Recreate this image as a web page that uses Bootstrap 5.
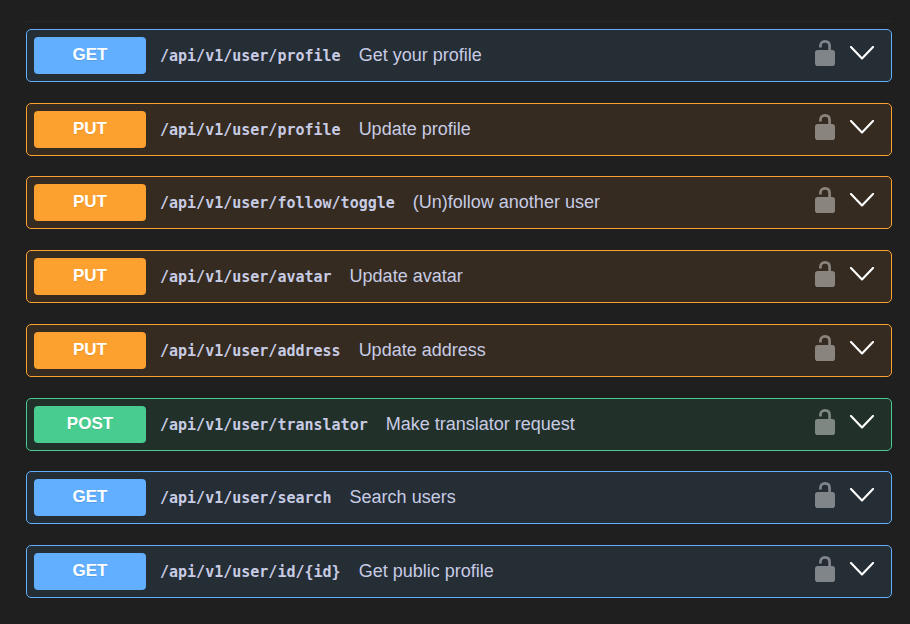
<!DOCTYPE html>
<html lang="en">
<head>
<meta charset="utf-8">
<meta name="viewport" content="width=device-width, initial-scale=1">
<title>User API</title>
<link href="https://cdn.jsdelivr.net/npm/bootstrap@5.3.0/dist/css/bootstrap.min.css" rel="stylesheet">
<style>
  body { background: #1f1f1f; color: #c8cbe4; font-family: "Liberation Sans", Arial, sans-serif; }
  .api-page { padding: 21px 18px 26px 26px; }
  .api-list { border-top: 1px solid #262626; padding-top: 7px; }
  .op { --tone: 97, 175, 254; background: rgba(var(--tone), .1); border: 1px solid rgb(var(--tone)); border-radius: 5px; padding: 7px 16px 7px 7px; }
  .op-put { --tone: 252, 161, 48; }
  .op-post { --tone: 73, 204, 144; }
  .op-main { font-size: 18px; line-height: 22px; gap: 14px; }
  .op-method { width: 112px; height: 37px; line-height: 36px; border-radius: 4px; background: rgb(var(--tone)); color: #fff; font-size: 17px; font-weight: 700; text-shadow: 0 1px 0 rgba(0, 0, 0, .1); }
  .op-path { font-family: "DejaVu Sans Mono", monospace; font-size: 15px; font-weight: 700; line-height: 20px; }
  .op-text { column-gap: 18px; padding-bottom: 1px; }
  .op-tools { gap: 14px; padding-bottom: 5px; }
  .op-tools .btn { line-height: 0; color: #fff; }
  .op-tools .lock-btn { opacity: .42; }
</style>
</head>
<body>
<main class="api-page min-vh-100 d-flex flex-column">
  <svg class="d-none" aria-hidden="true">
    <symbol id="unlock" viewBox="0 0 20 26">
      <rect x="0" y="10" width="20" height="16" rx="2.8" fill="currentColor"/>
      <path d="M5.4 7.4V6.2C5.4 3.2 7.1 1.4 10 1.4s4.6 1.8 4.6 4.8V10" fill="none" stroke="currentColor" stroke-width="2.7"/>
    </symbol>
    <symbol id="chevron" viewBox="0 0 24 14">
      <path d="M1 1 12 12.5 23 1" fill="none" stroke="currentColor" stroke-width="2.1" stroke-linecap="round" stroke-linejoin="round"/>
    </symbol>
  </svg>
  <div id="ops" class="api-list flex-grow-1 d-flex flex-column justify-content-between"></div>
</main>
<script>
  const operations = [
    ["get", "/api/v1/user/profile", "Get your profile"],
    ["put", "/api/v1/user/profile", "Update profile"],
    ["put", "/api/v1/user/follow/toggle", "(Un)follow another user"],
    ["put", "/api/v1/user/avatar", "Update avatar"],
    ["put", "/api/v1/user/address", "Update address"],
    ["post", "/api/v1/user/translator", "Make translator request"],
    ["get", "/api/v1/user/search", "Search users"],
    ["get", "/api/v1/user/id/{id}", "Get public profile"]
  ];
  document.getElementById("ops").innerHTML = operations.map(([method, path, text]) => `
    <div class="op op-${method} d-flex align-items-center">
      <button type="button" class="op-main btn border-0 p-0 text-reset text-start d-flex align-items-center flex-grow-1">
        <span class="op-method text-center flex-shrink-0">${method.toUpperCase()}</span>
        <span class="op-text d-flex flex-wrap align-items-baseline">
          <span class="op-path">${path}</span>
          <span>${text}</span>
        </span>
      </button>
      <div class="op-tools d-flex align-items-center">
        <button type="button" class="lock-btn btn border-0 p-0" aria-label="Authorize"><svg width="20" height="26"><use href="#unlock"/></svg></button>
        <button type="button" class="btn border-0 p-0" aria-label="Expand"><svg width="26" height="14"><use href="#chevron"/></svg></button>
      </div>
    </div>`).join("");
</script>
<script src="https://cdn.jsdelivr.net/npm/bootstrap@5.3.0/dist/js/bootstrap.bundle.min.js"></script>
</body>
</html>
